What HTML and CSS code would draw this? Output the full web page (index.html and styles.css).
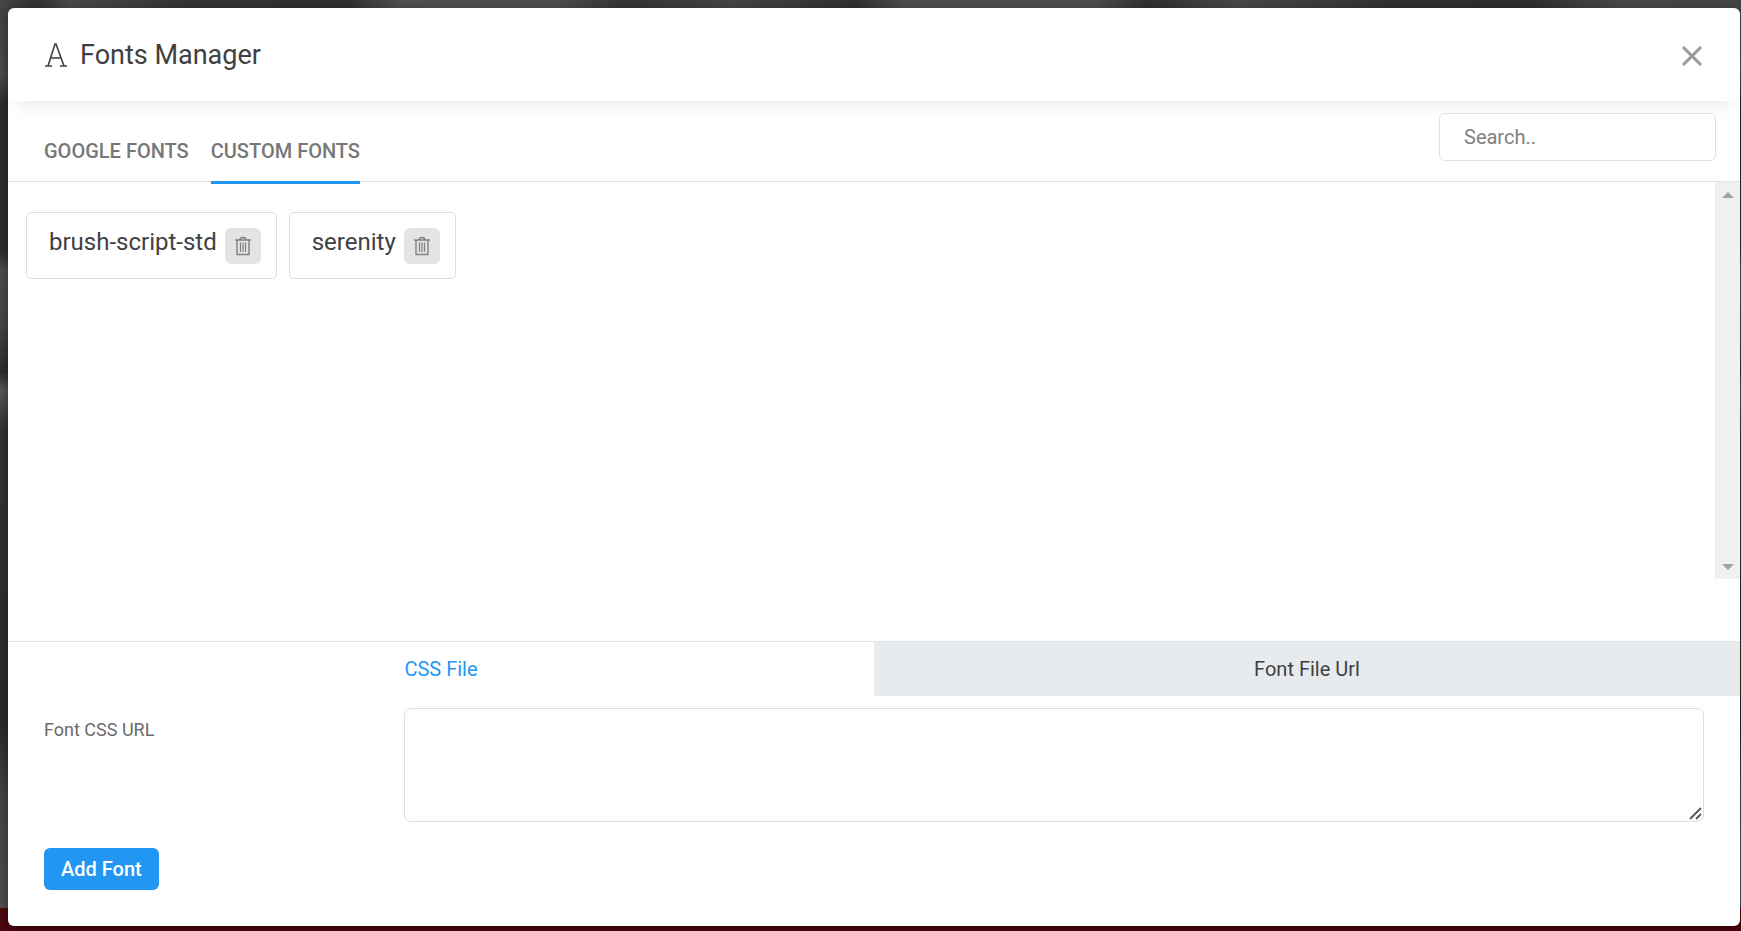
FILE: index.html
```html
<!DOCTYPE html>
<html lang="en">
<head>
    <meta charset="UTF-8">
    <meta name="viewport" content="width=device-width, initial-scale=1.0">
    <title>Fonts Manager</title>
    <link rel="stylesheet" href="styles.css">
</head>
<body>

<div class="modal">
    <header class="modal-header">
        <svg class="title-icon" width="24" height="26" viewBox="0 0 24 26" aria-hidden="true">
            <path d="M4 24 L11 2 H12 L20 24 M7 16 H17 M1 24 H8 M16 24 H23" />
        </svg>
        <h1>Fonts Manager</h1>
        <button type="button" class="close-btn" aria-label="Close">
            <svg width="20" height="20" viewBox="0 0 20 20" aria-hidden="true">
                <path d="M1 1 L19 19 M19 1 L1 19" />
            </svg>
        </button>
    </header>

    <div class="toolbar">
        <nav class="tabs">
            <a href="#google">GOOGLE FONTS</a>
            <a href="#custom" class="active">CUSTOM FONTS</a>
        </nav>
        <input type="search" class="search" placeholder="Search.." aria-label="Search fonts">
    </div>

    <div class="font-area">
        <ul class="font-list">
            <li class="font-item">
                <span>brush-script-std</span>
                <button type="button" class="delete-btn" aria-label="Delete brush-script-std">
                    <svg width="18" height="20" viewBox="0 0 18 20" aria-hidden="true">
                        <path d="M1 4 H17 M6 4 Q6 1.5 9 1.5 Q12 1.5 12 4 M3 4 V18.5 H15 V4" />
                        <path class="ribs" d="M6.5 6.5 V16 M9 6.5 V16 M11.5 6.5 V16" />
                    </svg>
                </button>
            </li>
            <li class="font-item">
                <span>serenity</span>
                <button type="button" class="delete-btn" aria-label="Delete serenity">
                    <svg width="18" height="20" viewBox="0 0 18 20" aria-hidden="true">
                        <path d="M1 4 H17 M6 4 Q6 1.5 9 1.5 Q12 1.5 12 4 M3 4 V18.5 H15 V4" />
                        <path class="ribs" d="M6.5 6.5 V16 M9 6.5 V16 M11.5 6.5 V16" />
                    </svg>
                </button>
            </li>
        </ul>
        <div class="scrollbar">
            <button type="button" aria-label="Scroll up">
                <svg width="12" height="6" viewBox="0 0 12 6"><path d="M0 6 L6 0 L12 6 Z" /></svg>
            </button>
            <button type="button" aria-label="Scroll down">
                <svg width="12" height="6" viewBox="0 0 12 6"><path d="M0 0 L6 6 L12 0 Z" /></svg>
            </button>
        </div>
    </div>

    <div class="source-tabs">
        <button type="button" class="active">CSS File</button>
        <button type="button">Font File Url</button>
    </div>

    <form class="add-form">
        <div class="form-row">
            <label for="fontUrl">Font CSS URL</label>
            <div class="textarea-wrap">
                <textarea id="fontUrl" name="fontUrl"></textarea>
                <svg class="grip" width="13" height="13" viewBox="0 0 13 13" aria-hidden="true">
                    <path d="M1 12 L12 1 M7 12 L12 7" />
                </svg>
            </div>
        </div>
        <button type="submit" class="add-btn">Add Font</button>
    </form>
</div>

</body>
</html>
```

FILE: styles.css
```css
* {
    box-sizing: border-box;
}
body {
    margin: 0;
    padding: 8px 1px 5px 8px;
    min-height: 100vh;
    display: flex;
    font-family: Roboto, Arial, sans-serif;
    color: #3f4042;
    background:
        linear-gradient(#4a070d, #4a070d) bottom / 100% 23px no-repeat,
        linear-gradient(90deg, #484848 0, #303030 2%, #484848 4%, #333 11%, #303030 20%, #505050 23%, #4c4c4c 32%, #343434 36%, #444 42%, #303030 49%, #4c4c4c 52%, #4c4c4c 63%, #303030 66%, #484848 71%, #303030 80%, #2e2e2e 88%, #484848 93%, #444 100%) top / 100% 8px no-repeat,
        linear-gradient(#404040 0, #4a4a4a 8%, #2c2c2c 11%, #2c2c2c 27%, #4c4c4c 29%, #444 35%, #2c2c2c 40%, #565656 42%, #333 46%, #2a2a2a 78%, #454545 86%, #4c4c4c 97%);
}
button, input, textarea {
    font-family: inherit;
    color: inherit;
}
button {
    border: none;
    padding: 0;
    background: none;
    cursor: pointer;
}
svg {
    display: block;
    fill: none;
    stroke: currentColor;
}
.modal {
    flex: 1;
    display: flex;
    flex-direction: column;
    background-color: white;
    border-radius: 6px;
    box-shadow: 0 2px 8px rgba(0, 0, 0, 0.4);
}
.modal-header {
    display: flex;
    align-items: center;
    height: 93px;
    padding: 0 38px 0 36px;
    border-radius: 6px 6px 0 0;
    box-shadow: 0 14px 16px -10px rgba(0, 0, 0, 0.09);
}
.modal-header h1 {
    flex: 1;
    margin: 0 0 0 12px;
    font-size: 27px;
    font-weight: 400;
}
.title-icon {
    stroke-width: 1.6;
}
.close-btn {
    padding-top: 2px;
    color: #999;
}
.close-btn svg {
    stroke-width: 3;
}

.toolbar {
    display: flex;
    justify-content: space-between;
    align-items: flex-start;
    height: 81px;
    padding: 12px 24px 0 36px;
    border-bottom: 1px solid #e2e2e2;
}
.tabs {
    display: flex;
    align-self: stretch;
    gap: 22px;
}
.tabs a {
    height: 71px;
    padding-top: 26px;
    color: #777;
    font-size: 20px;
    font-weight: 500;
    line-height: 24px;
    text-decoration: none;
}
.tabs .active {
    border-bottom: 3px solid #2196f3;
}
.search {
    width: 277px;
    height: 48px;
    padding: 0 24px;
    border: 1px solid #e2e2e2;
    border-radius: 6px;
    background-color: white;
    font-size: 20px;
}
.search::placeholder {
    color: #808080;
}

.font-area {
    display: flex;
    flex: 1;
    margin-bottom: 62px;
}
.font-list {
    display: flex;
    flex: 1;
    align-items: flex-start;
    gap: 12px;
    margin: 0;
    padding: 30px 18px;
    list-style: none;
}
.font-item {
    display: flex;
    gap: 8px;
    height: 67px;
    padding: 15px 15px 0 22px;
    border: 1px solid #ddd;
    border-radius: 5px;
    font-size: 24px;
    line-height: 28px;
}
.delete-btn {
    display: grid;
    place-items: center;
    width: 36px;
    height: 36px;
    border-radius: 6px;
    background-color: #e4e4e4;
    color: #808080;
}
.delete-btn svg {
    stroke-width: 1.4;
}
.delete-btn .ribs {
    stroke-width: 1.2;
}
.scrollbar {
    display: flex;
    flex-direction: column;
    justify-content: space-between;
    width: 25px;
    background-color: #f0f0f0;
}
.scrollbar button {
    display: grid;
    place-items: center;
    height: 25px;
}
.scrollbar svg {
    fill: #a3a3a3;
    stroke: none;
}

.source-tabs {
    display: flex;
    border-top: 1px solid #e2e2e2;
}
.source-tabs button {
    flex: 1;
    height: 54px;
    background-color: #e7ebee;
    font-size: 20px;
}
.source-tabs .active {
    background-color: white;
    color: #2196f3;
}
.add-form {
    padding: 12px 36px 36px;
}
.form-row {
    display: flex;
    margin-bottom: 26px;
}
.form-row label {
    width: 360px;
    padding-top: 10px;
    color: #6b6b6b;
    font-size: 18px;
    line-height: 24px;
}
.textarea-wrap {
    position: relative;
    flex: 1;
}
textarea {
    display: block;
    width: 100%;
    height: 114px;
    padding: 12px;
    border: 1px solid #ddd;
    border-radius: 7px;
    font-size: 18px;
    resize: none;
}
.grip {
    position: absolute;
    right: 2px;
    bottom: 2px;
    color: #555;
    stroke-width: 1.8;
}
.add-btn {
    height: 42px;
    padding: 0 17px;
    border-radius: 6px;
    background-color: #2196f3;
    color: white;
    font-size: 20px;
    font-weight: 500;
}
```
